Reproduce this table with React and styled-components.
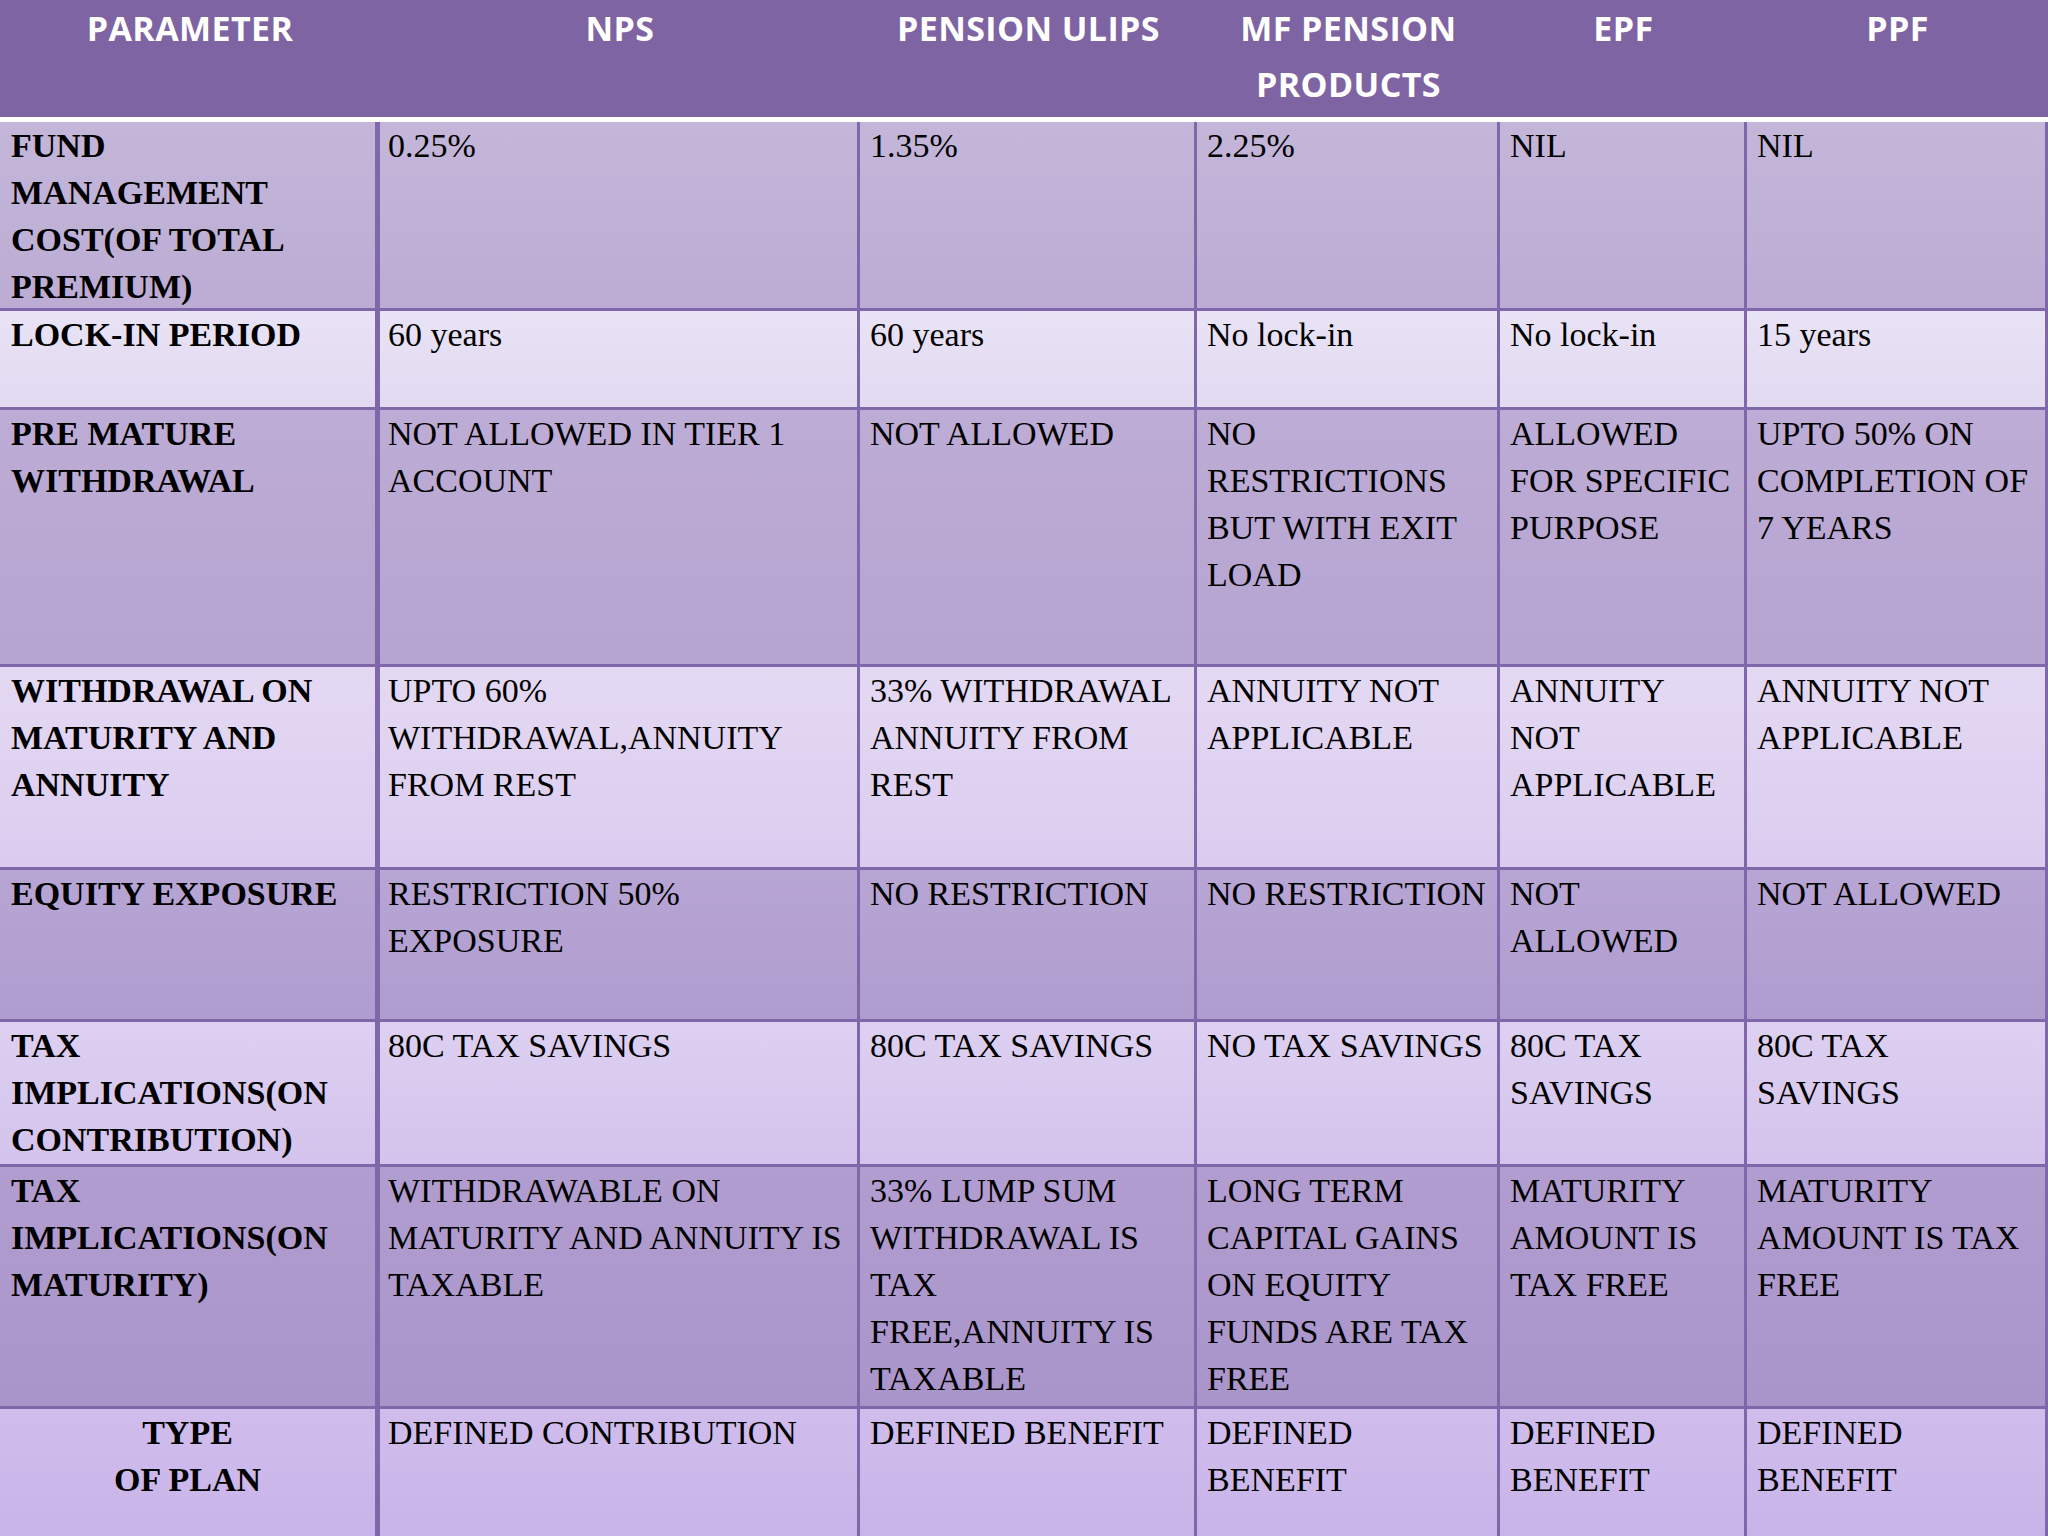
import React from "react";
import styled, { createGlobalStyle } from "styled-components";

const GlobalStyle = createGlobalStyle`
    html, body {
        margin: 0;
        padding: 0;
        background: #ffffff;
        overflow: hidden;
    }
    * {
        box-sizing: border-box;
    }
`;

const COLUMNS = "380px 480px 337px 303px 247px 301px";

// light / dark banding, each with a soft top-to-bottom fade
const tones = {
    r1: ["#c4b6d9", "#bcacd4"],
    r2: ["#e9e3f6", "#e2daf1"],
    r3: ["#bdacd5", "#b6a4d1"],
    r4: ["#e4d9f3", "#dbccef"],
    r5: ["#b7a5d4", "#b09dd0"],
    r6: ["#ddd0f1", "#d4c3ec"],
    r7: ["#b19dcf", "#aa95cb"],
    r8: ["#d0bdec", "#c8b2e8"],
};

const headers = ["PARAMETER", "NPS", "PENSION ULIPS", ["MF PENSION", "PRODUCTS"], "EPF", "PPF"];

const rows = [
    {
        height: 189,
        tone: "r1",
        label: ["FUND", "MANAGEMENT", "COST(OF TOTAL", "PREMIUM)"],
        cells: [["0.25%"], ["1.35%"], ["2.25%"], ["NIL"], ["NIL"]],
    },
    {
        height: 99,
        tone: "r2",
        label: ["LOCK-IN PERIOD"],
        cells: [["60 years"], ["60 years"], ["No lock-in"], ["No lock-in"], ["15 years"]],
    },
    {
        height: 257,
        tone: "r3",
        label: ["PRE MATURE", "WITHDRAWAL"],
        cells: [
            ["NOT ALLOWED IN TIER 1", "ACCOUNT"],
            ["NOT ALLOWED"],
            ["NO", "RESTRICTIONS", "BUT WITH EXIT", "LOAD"],
            ["ALLOWED", "FOR SPECIFIC", "PURPOSE"],
            ["UPTO 50% ON", "COMPLETION OF", "7 YEARS"],
        ],
    },
    {
        height: 203,
        tone: "r4",
        label: ["WITHDRAWAL ON", "MATURITY AND", "ANNUITY"],
        cells: [
            ["UPTO 60%", "WITHDRAWAL,ANNUITY", "FROM REST"],
            ["33% WITHDRAWAL", "ANNUITY FROM", "REST"],
            ["ANNUITY NOT", "APPLICABLE"],
            ["ANNUITY", "NOT", "APPLICABLE"],
            ["ANNUITY NOT", "APPLICABLE"],
        ],
    },
    {
        height: 152,
        tone: "r5",
        label: ["EQUITY EXPOSURE"],
        cells: [
            ["RESTRICTION 50%", "EXPOSURE"],
            ["NO RESTRICTION"],
            ["NO RESTRICTION"],
            ["NOT", "ALLOWED"],
            ["NOT ALLOWED"],
        ],
    },
    {
        height: 145,
        tone: "r6",
        label: ["TAX", "IMPLICATIONS(ON", "CONTRIBUTION)"],
        cells: [
            ["80C TAX SAVINGS"],
            ["80C TAX SAVINGS"],
            ["NO TAX SAVINGS"],
            ["80C TAX", "SAVINGS"],
            ["80C TAX", "SAVINGS"],
        ],
    },
    {
        height: 242,
        tone: "r7",
        label: ["TAX", "IMPLICATIONS(ON", "MATURITY)"],
        cells: [
            ["WITHDRAWABLE ON", "MATURITY AND ANNUITY IS", "TAXABLE"],
            ["33% LUMP SUM", "WITHDRAWAL IS", "TAX", "FREE,ANNUITY IS", "TAXABLE"],
            ["LONG TERM", "CAPITAL GAINS", "ON EQUITY", "FUNDS ARE TAX", "FREE"],
            ["MATURITY", "AMOUNT IS", "TAX FREE"],
            ["MATURITY", "AMOUNT IS TAX", "FREE"],
        ],
    },
    {
        height: 150,
        tone: "r8",
        label: ["TYPE", "OF PLAN"],
        centered: true,
        cells: [
            ["DEFINED CONTRIBUTION"],
            ["DEFINED BENEFIT"],
            ["DEFINED", "BENEFIT"],
            ["DEFINED", "BENEFIT"],
            ["DEFINED", "BENEFIT"],
        ],
    },
];

const App = () => {
    return (
        <>
            <GlobalStyle />
            <Table>
                <HeaderRow>
                    {headers.map((h, i) => (
                        <HeaderCell key={i}>
                            {Array.isArray(h) ? h.map(line => <Line key={line}>{line}</Line>) : h}
                        </HeaderCell>
                    ))}
                </HeaderRow>
                {rows.map((row, r) => (
                    <Row key={r} $height={row.height} $tone={row.tone}>
                        <LabelCell $centered={row.centered}>
                            {row.label.map(line => (
                                <Line key={line}>{line}</Line>
                            ))}
                        </LabelCell>
                        {row.cells.map((lines, c) => (
                            <Cell key={c} $first={c === 0}>
                                {lines.map((line, k) => (
                                    <Line key={k}>{line}</Line>
                                ))}
                            </Cell>
                        ))}
                    </Row>
                ))}
            </Table>
        </>
    );
};

export default App;

const Table = styled.div`
    width: 2048px;
    height: 1536px;
    overflow: hidden;
    display: flex;
    flex-direction: column;
`;

const HeaderRow = styled.div`
    display: grid;
    grid-template-columns: ${COLUMNS};
    height: 122px;
    flex: none;
    background: #7e64a2;
    border-bottom: 5px solid #ffffff;
`;

const HeaderCell = styled.div`
    padding-top: 0;
    text-align: center;
    color: #ffffff;
    font-family: "Open Sans", "Liberation Sans", sans-serif;
    font-weight: 700;
    font-size: 34px;
    letter-spacing: 0.4px;
    line-height: 56px;
`;

const Row = styled.div`
    display: grid;
    grid-template-columns: ${COLUMNS};
    flex: none;
    height: ${props => props.$height}px;
    background: linear-gradient(
        to bottom,
        ${props => tones[props.$tone][0]},
        ${props => tones[props.$tone][1]}
    );
    border-bottom: 3px solid #7f67aa;
`;

const Cell = styled.div`
    padding: 0 2px 0 ${props => (props.$first ? 8 : 10)}px;
    border-right: 3px solid #7f67aa;
    font-family: "Liberation Serif", "Times New Roman", serif;
    font-size: 34px;
    line-height: 47px;
    color: #000000;
`;

const LabelCell = styled(Cell)`
    padding: 0 11px 0 11px;
    border-right-width: 5px;
    font-weight: 700;
    text-align: ${props => (props.$centered ? "center" : "left")};
`;

const Line = styled.span`
    display: block;
    white-space: nowrap;
`;
